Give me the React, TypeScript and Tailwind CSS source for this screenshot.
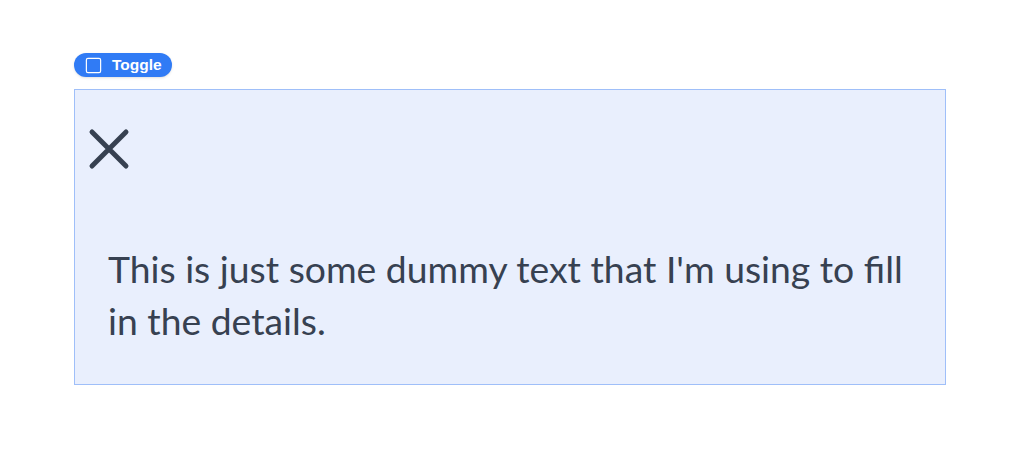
import { Square } from 'lucide-react';

function XMark() {
  return (
    <svg
      width="68"
      height="68"
      viewBox="0 0 24 24"
      fill="none"
      stroke="currentColor"
      strokeWidth={1.75}
      strokeLinecap="round"
      strokeLinejoin="round"
    >
      <path d="M6 18 18 6M6 6l12 12" />
    </svg>
  );
}

export default function App() {
  return (
    <div className="min-h-screen bg-white pt-[53px] px-[74px] pr-[78px]">
      {/* toggle pill */}
      <button className="flex items-center gap-[9px] h-6 w-[98px] pl-[10px] rounded-full bg-[#307bf5] text-white text-[15.5px] font-bold font-['Liberation_Sans',Arial,sans-serif] shadow-sm">
        <Square size={19} strokeWidth={1.5} />
        <span>Toggle</span>
      </button>

      {/* panel */}
      <div className="mt-3 h-[296px] border border-[#9fbff9] bg-[#e9effd] text-[#374151]">
        <div className="mt-[25px] w-[68px] h-[68px] text-[#374151]">
          <XMark />
        </div>
        <p className="mt-[60px] pl-[33px] pr-[33px] text-[37.3px] leading-[52px] font-['Lato',sans-serif]">
          This is just some dummy text that I'm using to fill in the details.
        </p>
      </div>
    </div>
  );
}
